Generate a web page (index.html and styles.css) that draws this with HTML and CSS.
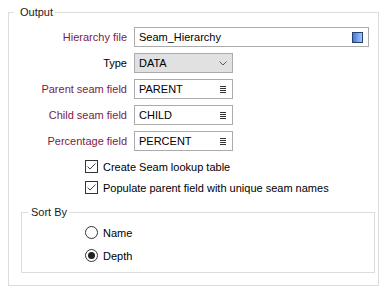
FILE: index.html
```html
<!DOCTYPE html>
<html lang="en">
<head>
    <meta charset="UTF-8">
    <title>Seam Hierarchy • Output</title>
    <link rel="stylesheet" href="styles.css">
</head>
<body>
    <fieldset class="group output">
        <legend>Output</legend>

        <!-- Field rows -->
        <div class="form">
            <label class="lbl req">Hierarchy file</label>
            <div class="field wide">
                <span>Seam_Hierarchy</span>
                <span class="file-icon"></span>
            </div>

            <label class="lbl">Type</label>
            <div class="field select">
                <span>DATA</span>
                <svg width="8" height="5" viewBox="0 0 8 5"><path d="M0.5 0.5 L4 4 L7.5 0.5" fill="none" stroke="#5a5a5a" stroke-width="1"/></svg>
            </div>

            <label class="lbl req">Parent seam field</label>
            <div class="field">
                <span>PARENT</span>
                <span class="list-icon"></span>
            </div>

            <label class="lbl req">Child seam field</label>
            <div class="field">
                <span>CHILD</span>
                <span class="list-icon"></span>
            </div>

            <label class="lbl req">Percentage field</label>
            <div class="field">
                <span>PERCENT</span>
                <span class="list-icon"></span>
            </div>
        </div>

        <!-- Options -->
        <div class="checks">
            <div class="check">
                <span class="box"><svg width="11" height="11" viewBox="0 0 11 11"><path d="M1.5 5.5 L4 8 L9.5 2.5" fill="none" stroke="#444" stroke-width="1"/></svg></span>
                Create Seam lookup table
            </div>
            <div class="check">
                <span class="box"><svg width="11" height="11" viewBox="0 0 11 11"><path d="M1.5 5.5 L4 8 L9.5 2.5" fill="none" stroke="#444" stroke-width="1"/></svg></span>
                Populate parent field with unique seam names
            </div>
        </div>

        <fieldset class="group sort">
            <legend>Sort By</legend>
            <div class="radios">
                <div class="radio"><span class="circle"></span>Name</div>
                <div class="radio"><span class="circle on"></span>Depth</div>
            </div>
        </fieldset>
    </fieldset>
</body>
</html>
```

FILE: styles.css
```css
* {
    margin: 0;
    padding: 0;
    box-sizing: border-box;
}

body {
    font-family: "Liberation Sans", Arial, sans-serif;
    font-size: 11px;
    color: #000;
    background: #fff;
    padding: 5px 6px 0 8px;
}

.group {
    border: 1px solid #dcdcdc;
}

.group legend {
    line-height: 14px;
    color: #1a1a1a;
}

.output {
    height: 281px;
    padding: 8px 0 12px 0;
}

.output legend {
    margin-left: 5px;
    padding: 0 2px 0 6px;
}

.form {
    display: grid;
    grid-template-columns: 118px 1fr;
    column-gap: 7px;
    row-gap: 6px;
    padding-right: 9px;
}

.lbl {
    display: flex;
    align-items: center;
    justify-content: flex-end;
    height: 20px;
}

.lbl.req {
    color: #7d1a45;
}

.field {
    width: 99px;
    height: 20px;
    border: 1px solid #ababab;
    background: #fff;
    display: flex;
    align-items: center;
    justify-content: space-between;
    padding: 0 6px 0 4px;
}

.field.wide {
    width: auto;
    padding-right: 5px;
}

.field.select {
    background: #e1e1e1;
    padding-right: 5px;
}

.file-icon {
    width: 11px;
    height: 11px;
    border: 1px solid #27406e;
    background: linear-gradient(90deg, #3f78dc, #a9c6f7);
}

.list-icon {
    width: 6px;
    height: 7px;
    background: repeating-linear-gradient(180deg, #333 0 1px, transparent 1px 2px);
}

.checks {
    margin-top: 5px;
    padding-left: 76px;
}

.check {
    display: flex;
    align-items: center;
    gap: 5px;
    height: 21px;
}

.box {
    width: 13px;
    height: 13px;
    border: 1px solid #333;
    background: #fff;
    display: flex;
}

.sort {
    margin: 7px 3px 0 12px;
    padding: 2px 0 5px 0;
}

.sort legend {
    margin-left: 6px;
    padding: 0 2px 0 3px;
}

.radios {
    padding-left: 63px;
}

.radio {
    display: flex;
    align-items: center;
    gap: 5px;
    height: 23px;
}

.circle {
    width: 13px;
    height: 13px;
    border: 1px solid #333;
    border-radius: 50%;
    background: #fff;
    display: flex;
    align-items: center;
    justify-content: center;
}

.circle.on::after {
    content: "";
    width: 7px;
    height: 7px;
    border-radius: 50%;
    background: #222;
}
```
